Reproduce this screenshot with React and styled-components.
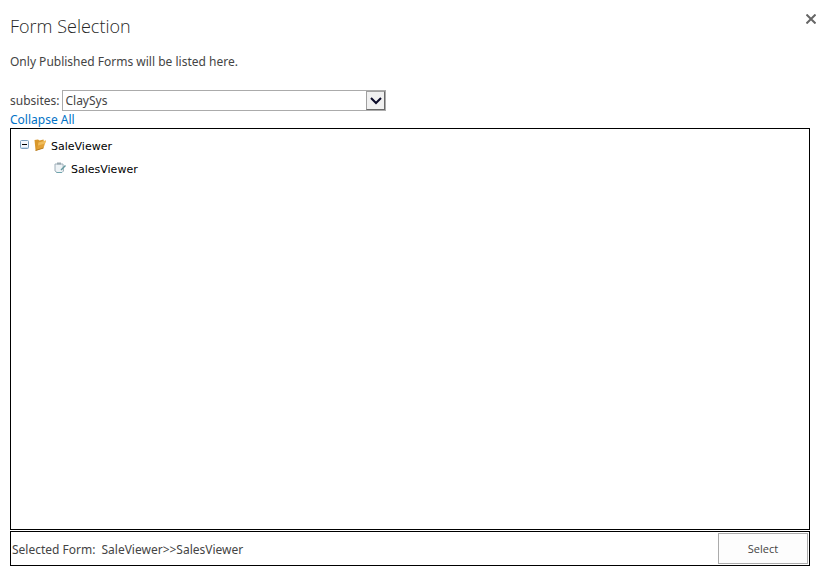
import React, { useState } from 'react'
import styled, { createGlobalStyle } from 'styled-components'

const GlobalStyle = createGlobalStyle`
    body {
        margin: 0;
        background: #fff;
        color: #444;
        font-family: 'Noto Sans', 'Open Sans', sans-serif;
        font-size: 12px;
        line-height: 20px;
    }
    *, *::before, *::after {
        box-sizing: border-box;
    }
`

const FolderIcon = () => (
    <svg width="12" height="14" viewBox="0 0 12 14" aria-hidden="true">
        <path d="M0.5 2 L4 1.5 L5.5 2.5 L9.5 1.5 L10 4 L2.5 12.5 L1.5 12 Z" fill="#d9982c" />
        <path d="M2.5 12.5 L4.5 4.5 L12 2.5 L9.5 10 Z" fill="#e3a136" />
        <path d="M4.5 4.5 L12 2.5 L11 5.5 L4 7.5 Z" fill="#f0bd5c" />
        <path d="M1.5 12.5 L9.5 10" stroke="#b77a1c" />
    </svg>
)

const FormIcon = () => (
    <svg width="12" height="12" viewBox="0 0 12 12" aria-hidden="true">
        <path d="M1 2 H9 L9.5 9 L8 10.5 H3 L1 9 Z" fill="#eef3f6" stroke="#9fb0ba" />
        <path d="M3 0.5 H7 V2.5 H3 Z" fill="#9aa9b1" />
        <path d="M2.5 10.5 H8" stroke="#6fa5ad" />
        <path d="M7 8 L11.5 3.5" stroke="#64999f" strokeWidth="1.5" />
    </svg>
)

const CollapseIcon = () => (
    <svg width="9" height="9" viewBox="0 0 9 9" aria-hidden="true">
        <rect x="0.5" y="0.5" width="8" height="8" rx="1" fill="#f3f7fc" stroke="#7b9ebd" />
        <path d="M1 7.5 H8" stroke="#c8dced" />
        <path d="M2 4.5 H7" stroke="#000" />
    </svg>
)

const ExpandIcon = () => (
    <svg width="9" height="9" viewBox="0 0 9 9" aria-hidden="true">
        <rect x="0.5" y="0.5" width="8" height="8" rx="1" fill="#f3f7fc" stroke="#7b9ebd" />
        <path d="M2 4.5 H7 M4.5 2 V7" stroke="#000" />
    </svg>
)

function App() {
    const [open, setOpen] = useState(true)

    const toggleAll = (e) => {
        e.preventDefault()
        setOpen(!open)
    }

    return (
        <>
            <GlobalStyle />
            <Dialog>
                <Header>
                    <Title>Form Selection</Title>
                    <CloseButton type="button" aria-label="Close">
                        <svg width="10" height="10" viewBox="0 0 10 10" aria-hidden="true">
                            <path d="M0.5 0.5 L9.5 9.5 M9.5 0.5 L0.5 9.5" stroke="#666" strokeWidth="2" />
                        </svg>
                    </CloseButton>
                </Header>
                <Content>
                    <Intro>Only Published Forms will be listed here.</Intro>
                    <Field>
                        <label htmlFor="subsites">subsites:</label>
                        <SelectWrap>
                            <Dropdown id="subsites">
                                <option>ClaySys</option>
                            </Dropdown>
                            <Arrow>
                                <svg width="12" height="8" viewBox="0 0 12 8" aria-hidden="true">
                                    <path d="M1 1 L6 6 L11 1" fill="none" stroke="#0a0a28" strokeWidth="2" />
                                </svg>
                            </Arrow>
                        </SelectWrap>
                    </Field>
                    <ToggleLink href="#" onClick={toggleAll}>
                        {open ? 'Collapse All' : 'Expand All'}
                    </ToggleLink>
                    <TreePanel>
                        <TreeRow>
                            <Icons>
                                <Toggle type="button" aria-label="Toggle SaleViewer" onClick={() => setOpen(!open)}>
                                    {open ? <CollapseIcon /> : <ExpandIcon />}
                                </Toggle>
                                <FolderIcon />
                            </Icons>
                            <span>SaleViewer</span>
                        </TreeRow>
                        {open && (
                            <TreeRow $nested>
                                <Icons>
                                    <FormIcon />
                                </Icons>
                                <span>SalesViewer</span>
                            </TreeRow>
                        )}
                    </TreePanel>
                    <Footer>
                        <Selection>
                            <span>Selected Form:</span>
                            <span>SaleViewer&gt;&gt;SalesViewer</span>
                        </Selection>
                        <SelectButton type="button">Select</SelectButton>
                    </Footer>
                </Content>
            </Dialog>
        </>
    )
}

export default App

const Dialog = styled.div`
    display: flex;
    flex-direction: column;
    min-height: 100vh;
    padding: 12px 10px 8px;
`

const Header = styled.header`
    display: flex;
    align-items: flex-start;
    justify-content: space-between;
`

const Title = styled.h1`
    margin: 0;
    font-family: 'Open Sans', 'Noto Sans', sans-serif;
    font-size: 18px;
    font-weight: 300;
    line-height: 28px;
    color: #262626;
`

const CloseButton = styled.button`
    display: flex;
    padding: 2px 4px;
    border: 0;
    background: none;
    cursor: pointer;
`

const Content = styled.main`
    display: flex;
    flex: 1;
    flex-direction: column;
    margin-right: 10px;
`

const Intro = styled.p`
    margin: 12px 0 18px;
`

const Field = styled.div`
    display: flex;
    align-items: center;
    gap: 3px;
`

const SelectWrap = styled.div`
    position: relative;
    width: 324px;
`

const Dropdown = styled.select`
    appearance: none;
    display: block;
    width: 100%;
    height: 21px;
    padding: 0 22px 0 2px;
    border: 1px solid #ababab;
    border-radius: 0;
    background: #fff;
    color: #444;
    font: inherit;
`

const Arrow = styled.span`
    position: absolute;
    top: 1px;
    right: 1px;
    bottom: 1px;
    display: flex;
    align-items: center;
    justify-content: center;
    width: 19px;
    border: 1px solid #a0a0a0;
    border-right-color: #696969;
    border-bottom-color: #696969;
    background: #f0f0f0;
    pointer-events: none;
`

const ToggleLink = styled.a`
    align-self: flex-start;
    line-height: 17px;
    color: #0072c6;
    text-decoration: none;
`

const TreePanel = styled.div`
    flex: 1;
    padding: 6px 9px;
    border: 1px solid #000;
    color: #000;
    font-family: 'DejaVu Sans', Verdana, sans-serif;
    font-size: 11px;
`

const TreeRow = styled.div`
    display: flex;
    align-items: center;
    gap: 5px;
    height: 23px;
    padding-left: ${(props) => (props.$nested ? '34px' : '0')};
`

const Icons = styled.span`
    display: flex;
    align-items: center;
    gap: 5px;
    padding-bottom: 4px;
`

const Toggle = styled.button`
    display: flex;
    padding: 0;
    border: 0;
    background: none;
    cursor: pointer;
`

const Footer = styled.footer`
    display: flex;
    align-items: center;
    justify-content: space-between;
    margin-top: 1px;
    padding: 1px;
    border: 1px solid #000;
`

const Selection = styled.div`
    display: flex;
    gap: 6px;
    padding-top: 2px;
`

const SelectButton = styled.button`
    width: 90px;
    height: 31px;
    border: 1px solid #ababab;
    background: #fdfdfd;
    color: #444;
    font-family: 'Open Sans', 'Noto Sans', sans-serif;
    font-size: 11px;
`
